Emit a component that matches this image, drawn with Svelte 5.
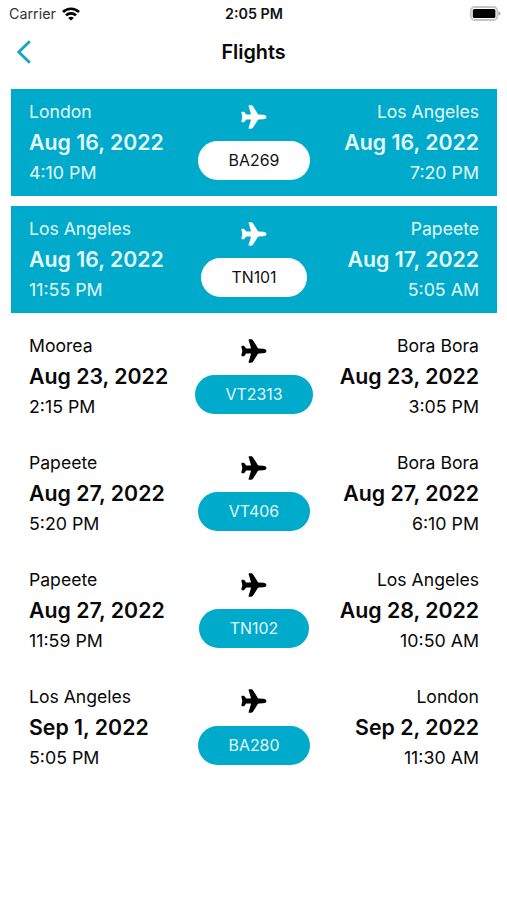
<script lang="ts">
  interface Stop {
    city: string;
    date: string;
    time: string;
  }

  interface Flight {
    code: string;
    from: Stop;
    to: Stop;
    past?: boolean;
  }

  const flights: Flight[] = [
    {
      code: 'BA269',
      from: { city: 'London', date: 'Aug 16, 2022', time: '4:10 PM' },
      to: { city: 'Los Angeles', date: 'Aug 16, 2022', time: '7:20 PM' },
      past: true,
    },
    {
      code: 'TN101',
      from: { city: 'Los Angeles', date: 'Aug 16, 2022', time: '11:55 PM' },
      to: { city: 'Papeete', date: 'Aug 17, 2022', time: '5:05 AM' },
      past: true,
    },
    {
      code: 'VT2313',
      from: { city: 'Moorea', date: 'Aug 23, 2022', time: '2:15 PM' },
      to: { city: 'Bora Bora', date: 'Aug 23, 2022', time: '3:05 PM' },
    },
    {
      code: 'VT406',
      from: { city: 'Papeete', date: 'Aug 27, 2022', time: '5:20 PM' },
      to: { city: 'Bora Bora', date: 'Aug 27, 2022', time: '6:10 PM' },
    },
    {
      code: 'TN102',
      from: { city: 'Papeete', date: 'Aug 27, 2022', time: '11:59 PM' },
      to: { city: 'Los Angeles', date: 'Aug 28, 2022', time: '10:50 AM' },
    },
    {
      code: 'BA280',
      from: { city: 'Los Angeles', date: 'Sep 1, 2022', time: '5:05 PM' },
      to: { city: 'London', date: 'Sep 2, 2022', time: '11:30 AM' },
    },
  ];
</script>

{#snippet stop(s: Stop)}
  <div class="stop">
    <span class="city">{s.city}</span>
    <strong class="date">{s.date}</strong>
    <span class="time">{s.time}</span>
  </div>
{/snippet}

<div class="screen">
  <div class="status">
    <div class="carrier">
      <span>Carrier</span>
      <svg viewBox="0 0 18 14" width="18" height="14" fill="none" stroke="#000" stroke-width="2.7">
        <path d="M1 5a11.5 11.5 0 0 1 16 0"></path>
        <path d="M4 8.4a7.2 7.2 0 0 1 10 0"></path>
        <path d="M9 13.6L6.2 11a4 4 0 0 1 5.6 0z" fill="#000" stroke="none"></path>
      </svg>
    </div>
    <span class="clock">2:05 PM</span>
    <svg class="battery" viewBox="0 0 32 15" width="32" height="15">
      <rect x="1.8" y="1" width="26.6" height="13" rx="4" fill="#fff" stroke="#c4c4c4" stroke-width="1.8"></rect>
      <rect x="3.8" y="3" width="22.6" height="9" rx="1.6" fill="#000"></rect>
      <path d="M29.5 5.2q2.2.8 2.2 2.3t-2.2 2.3z" fill="#a9a9a9"></path>
    </svg>
  </div>

  <header class="nav">
    <button class="back" aria-label="Back">
      <svg viewBox="0 0 16 26" width="16" height="26">
        <path d="M13.8 2.2L2.8 13l11 10.8" fill="none" stroke="currentColor" stroke-width="2.8"></path>
      </svg>
    </button>
    <h1>Flights</h1>
    <span></span>
  </header>

  <main>
    {#each flights as flight (flight.code)}
      <article class="flight" class:past={flight.past}>
        {@render stop(flight.from)}
        <div class="middle">
          <svg class="plane" viewBox="0 0 26 26" width="26" height="26" aria-hidden="true">
            <path
              d="M8.2 24.8h1.8c1 0 1.6-.4 2.1-1.2l4.7-7.5c.3-.4.6-.6 1.1-.6l4.2-.2c2-.1 3.3-.9 3.3-2.3s-1.3-2.2-3.3-2.3l-4.2-.2c-.5 0-.8-.2-1.1-.6l-4.7-7.5c-.5-.8-1.1-1.2-2.1-1.2H8.2c-.5 0-.7.4-.6.9l2.3 7.7c.1.4-.1.6-.5.6l-4.2.2-1.7-2.3c-.3-.4-.6-.6-1.1-.6H1.2c-.6 0-.9.4-.8 1L1.3 13l-.9 4.3c-.1.6.2 1 .8 1h1.2c.5 0 .8-.2 1.1-.6l1.7-2.3 4.2.2c.4 0 .6.2.5.6l-2.3 7.7c-.1.5.1.9.6.9z"
              fill="currentColor"
            ></path>
          </svg>
          <span class="code">{flight.code}</span>
        </div>
        {@render stop(flight.to)}
      </article>
    {/each}
  </main>
</div>

<style>
  :global(body) {
    background: #fff;
  }

  .screen {
    box-sizing: border-box;
    height: 900px;
    overflow: hidden;
    background: #fff;
    color: #080808;
    font-family: Inter, sans-serif;
  }

  .status {
    display: grid;
    grid-template-columns: 1fr auto 1fr;
    align-items: center;
    height: 27px;
    padding: 0 6px 0 9px;
    font-size: 14.3px;
  }

  .carrier {
    display: flex;
    align-items: center;
    gap: 6px;
    color: #333;
  }

  .clock {
    padding-right: 2px;
    font-weight: 600;
    color: #111;
  }

  .battery {
    justify-self: end;
  }

  .nav {
    display: grid;
    grid-template-columns: 1fr auto 1fr;
    align-items: center;
    height: 50px;
    padding: 0 16px;
  }

  .back {
    display: flex;
    width: 16px;
    padding: 0;
    border: 0;
    background: none;
    color: #14a5c4;
  }

  h1 {
    margin: 0;
    font-size: 19.8px;
    font-weight: 600;
    line-height: 26px;
  }

  main {
    display: flex;
    flex-direction: column;
    gap: 10px;
    padding: 12px 10px 0 11px;
  }

  .flight {
    box-sizing: border-box;
    display: grid;
    grid-template-columns: 1fr auto 1fr;
    height: 106.9px;
    padding: 8px 18px;
  }

  .stop {
    display: flex;
    flex-direction: column;
    padding-top: 0.4px;
    font-size: 17.6px;
    white-space: nowrap;
  }

  .stop:last-child {
    text-align: right;
  }

  .city,
  .time {
    line-height: 30px;
  }

  .time {
    font-size: 17.8px;
  }

  .date {
    font-size: 21.3px;
    font-weight: 600;
    line-height: 31px;
  }

  .middle {
    display: flex;
    flex-direction: column;
    align-items: center;
    gap: 11.4px;
    padding-top: 7px;
    color: #000;
  }

  .plane {
    display: block;
  }

  .code {
    padding: 0 30.5px;
    border-radius: 20px;
    background: #00aaca;
    color: #e2f7fb;
    font-size: 15.9px;
    line-height: 39px;
  }

  .past {
    background: #00aaca;
    color: #e4f8fc;
  }

  .past .middle {
    color: #fff;
  }

  .past .code {
    background: #fff;
    color: #111;
  }
</style>
